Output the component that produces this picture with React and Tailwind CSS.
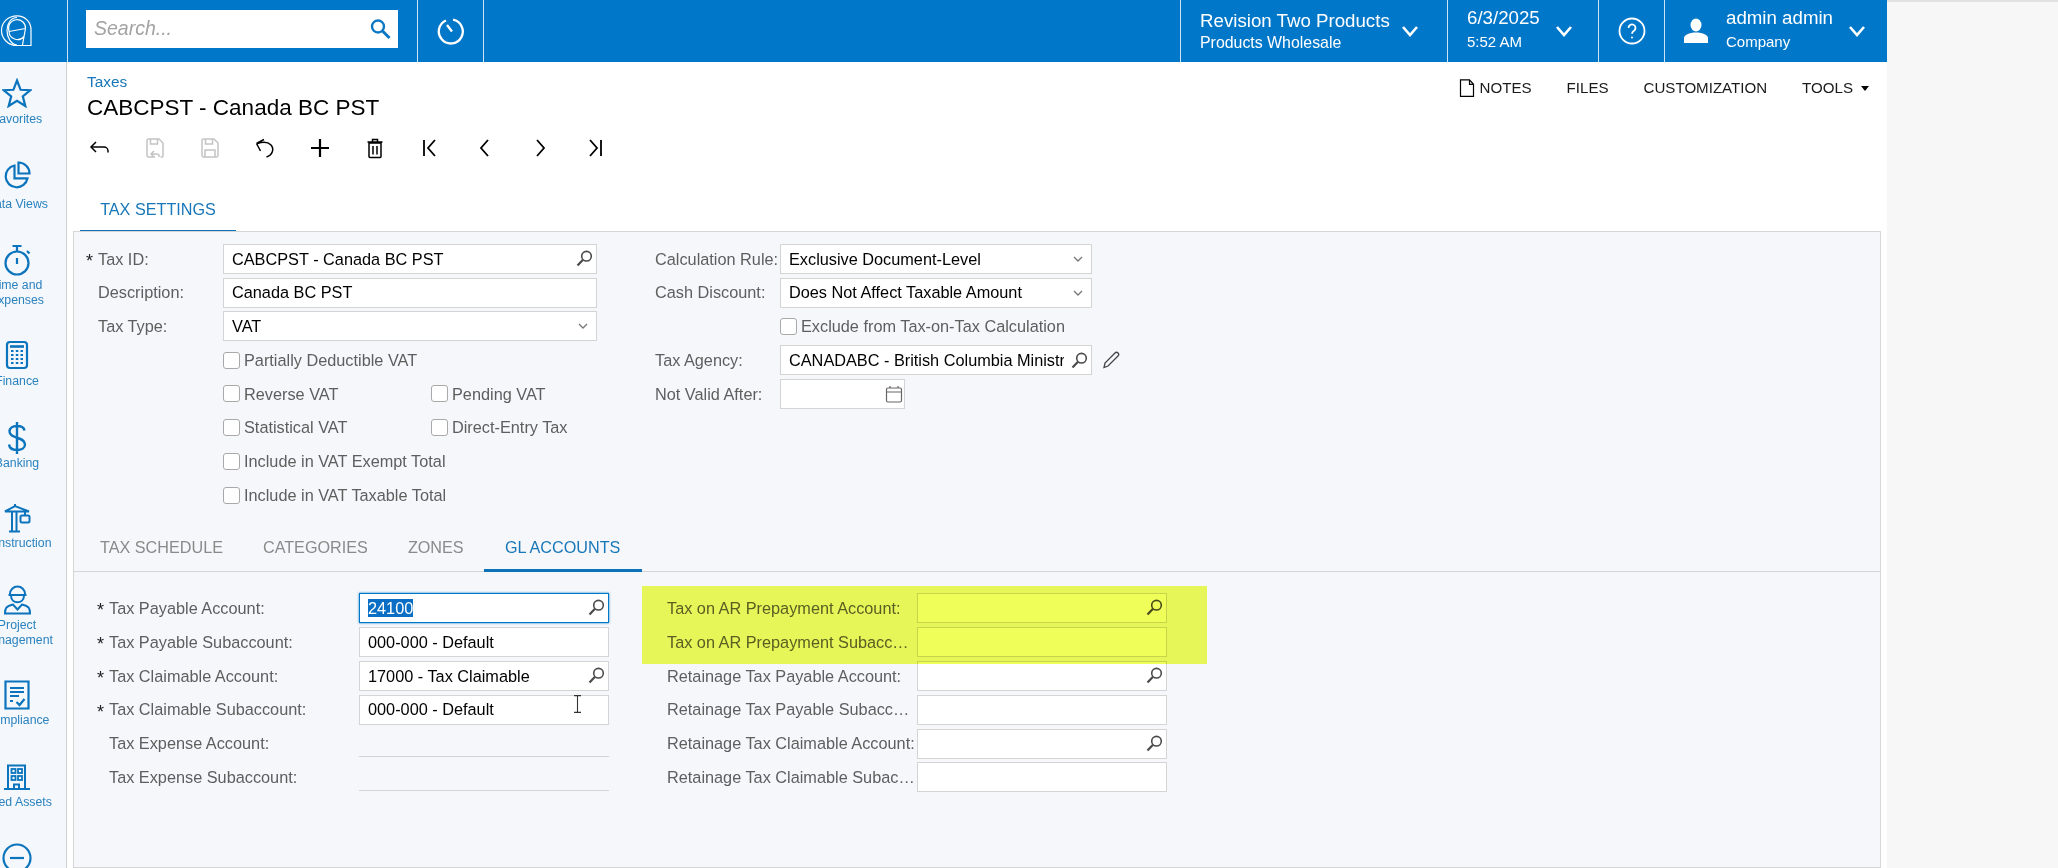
import React from 'react';

const Ico = ({ w = 24, h = 24, vb, className = '', sw = 2, children }) => (
    <svg width={w} height={h} viewBox={vb || `0 0 ${w} ${h}`} fill="none" stroke="currentColor" strokeWidth={sw} className={className}>
        {children}
    </svg>
);

// lookup glass, handle goes bottom-left
const Lookup = () => (
    <Ico w={17} h={17} sw={1.6} className="text-[#4a4a4a] shrink-0">
        <circle cx="10.5" cy="6.2" r="4.8" />
        <path d="M7 9.800 1.500 15.500" strokeWidth="2.2" />
    </Ico>
);

const Chevron = () => (
    <Ico w={14} h={14} sw={1.3} className="text-[#777] shrink-0 mr-[3px]">
        <path d="m3 5 4 4 4-4" />
    </Ico>
);

const HeadChevron = () => (
    <Ico w={18} h={14} sw={2.6} className="text-white shrink-0">
        <path d="m2 3 7 8 7-8" />
    </Ico>
);

const Field = ({ value, className = 'w-[375px]', icon, focused, selected, children }) => (
    <div className={`relative h-[30px] flex items-center pl-[8px] pr-[3px] bg-white border ${focused ? 'border-[#0078c8] shadow-[0_0_2px_#0078c8]' : 'border-[#d4d4d4]'} ${className}`}>
        <span className="flex-1 min-w-0 mr-[7px] overflow-hidden whitespace-nowrap text-black">
            {selected ? <span className="bg-[#0a6fc4] text-white">{value}</span> : value}
        </span>
        {icon}
        {children}
    </div>
);

const Label = ({ text, required, className = '' }) => (
    <div className={`flex items-center shrink-0 ${className}`}>
        <span className="w-[12px] shrink-0 text-[18px] text-[#222] leading-none pt-[5px]">{required ? '*' : ''}</span>
        <span className="truncate text-[#5e5e5e]">{text}</span>
    </div>
);

const Check = ({ label, className = '' }) => (
    <div className={`flex items-center gap-[4px] ${className}`}>
        <div className="w-[17px] h-[17px] bg-white rounded-[3px] border border-[#a9a9a9] shrink-0" />
        <span className="text-[#5e5e5e] whitespace-nowrap">{label}</span>
    </div>
);

const TopRow = ({ children }) => <div className="h-[33.75px] flex items-center">{children}</div>;

const SideItem = ({ label, icon, height, labelTop = 'mt-[-2px]' }) => (
    <div className={`flex flex-col items-center shrink-0 w-[96px] ml-[-31px] ${height}`}>
        <div className="h-[42px] flex items-center justify-center text-[#0b74bd]">{icon}</div>
        <div className={`text-[12.3px] leading-[15px] ${labelTop} text-[#2a82bf] text-center whitespace-pre-line`}>{label}</div>
    </div>
);

const sideItems = [
    {
        label: 'Favorites', height: 'h-[82px]',
        icon: <Ico w={30} h={30} sw={2.2}><path d="M15 2.5 18.6 11.8 28.4 12.2 20.8 18.4 23.3 28 15 22.7 6.7 28 9.2 18.4 1.6 12.2 11.4 11.8Z" /></Ico>,
    },
    {
        label: 'Data Views', height: 'h-[85px]', labelTop: 'mt-[1px]',
        icon: <Ico w={30} h={30} sw={2.2}><path d="M12.5 5.5a11 11 0 1 0 13 12.8h-13Z" /><path d="M16.5 2.5a11 11 0 0 1 11 11h-11Z" /></Ico>,
    },
    {
        label: 'Time and\nExpenses', height: 'h-[95px]', labelTop: 'mt-[-3px]',
        icon: <Ico w={30} h={34} sw={2.2}><circle cx="15" cy="20" r="11.5" /><path d="M10.5 3h9M15 3v5.5M15 15v6M25 8l2.5 2.5" /></Ico>,
    },
    {
        label: 'Finance', height: 'h-[83px]',
        icon: (
            <Ico w={24} h={30} sw={2.2}>
                <rect x="2" y="2" width="20" height="26" rx="3" />
                <path d="M5 6.5h14" strokeWidth="2.6" />
                <path d="M6 11h2.5M10.8 11h2.5M15.5 11h2.5M6 15h2.5M10.8 15h2.5M15.5 15h2.5M6 19h2.5M10.8 19h2.5M15.5 19h2.5M6 23h2.5M10.8 23h2.5M15.5 23h2.5" strokeWidth="2.2" />
            </Ico>
        ),
    },
    {
        label: 'Banking', height: 'h-[80px]', labelTop: 'mt-[-3px]',
        icon: <Ico w={22} h={34} sw={2.4}><path d="M11 1v32M18.5 9.5C18 6.5 15 5 11 5 6.5 5 3.5 7.2 3.5 10.5c0 7.5 15.5 5 15.5 13 0 3.3-3.5 5.5-8 5.5-4.500 0-7.500-2-8-5.500" /></Ico>,
    },
    {
        label: 'Construction', height: 'h-[82px]', labelTop: 'mt-[-3px]',
        icon: (
            <Ico w={30} h={30} sw={2}>
                <path d="M3 8.500 13 3l14 5.500Z" />
                <path d="M10 8.500V28M14.500 8.500V28M7 28.500h11M13 1v2M23 8.500v4" />
                <rect x="18.500" y="12.500" width="9" height="7" rx="1.500" />
            </Ico>
        ),
    },
    {
        label: 'Project\nManagement', height: 'h-[95px]', labelTop: 'mt-[-3px]',
        icon: (
            <Ico w={30} h={30} sw={2}>
                <path d="M8 9a7.500 7.500 0 0 1 15 0M6.500 10h18M9 10.500c0 9 13 9 13 0" />
                <path d="M3 28.500c0-5 1-7.500 8-9l4.500 5 4.500-5c7 1.500 8 4 8 9Z" />
            </Ico>
        ),
    },
    {
        label: 'Compliance', height: 'h-[82px]', labelTop: 'mt-[-3px]',
        icon: (
            <Ico w={26} h={30} sw={2.2}>
                <path d="M24.500 28.500H1.500v-27h23Z" />
                <path d="M6 8h14M6 12h14M6 16h9M6 21h3" />
                <path d="m12.500 22 3 3 5-6" />
            </Ico>
        ),
    },
    {
        label: 'Fixed Assets', height: 'h-[81px]', labelTop: 'mt-[-3px]',
        icon: (
            <Ico w={28} h={26} sw={2}>
                <path d="M5 25V1.500h17V25M1 25h26M11 25v-4.500h5V25" />
                <rect x="8.500" y="5" width="4" height="4" strokeWidth="1.800" />
                <rect x="15" y="5" width="4" height="4" strokeWidth="1.800" />
                <rect x="8.500" y="12" width="4" height="4" strokeWidth="1.800" />
                <rect x="15" y="12" width="4" height="4" strokeWidth="1.800" />
            </Ico>
        ),
    },
    {
        label: '', height: 'h-[60px]',
        icon: <Ico w={30} h={30} sw={2.2}><circle cx="15" cy="15" r="13.500" /><path d="M8 15h14" /></Ico>,
    },
];

const toolIcons = [
    { cls: 'text-black', el: <><path d="M19 15.500v-1.500a4 4 0 0 0-4-4H2" /><path d="M7 5 2 10l5 5" /></> },
    {
        cls: 'text-[#c4c4c4]',
        el: <><path d="M11 20H4.500a1.500 1.500 0 0 1-1.500-1.500V3.500A1.500 1.500 0 0 1 4.500 2H15l4 4v13a1 1 0 0 1-1 1h-1.500" /><path d="M6.500 2v5h7V2M10 14l-3 3 3 3M7 17h6a2 2 0 0 1 2 2v1" /></>,
    },
    {
        cls: 'text-[#c4c4c4]',
        el: <><path d="M4.500 20A1.500 1.500 0 0 1 3 18.500V3.500A1.500 1.500 0 0 1 4.500 2H15l4 4v12.500a1.500 1.500 0 0 1-1.500 1.500Z" /><path d="M6.500 2v5h7V2M6 20v-7h10v7" /></>,
    },
    { cls: 'text-black', el: <><path d="M2.500 6.500 10 2.500M2.500 6.500l4 7.500M3 6.800C9 4.500 14 5 17 8c3.500 4 1.500 10-4.500 12" /></> },
    { cls: 'text-black', el: <path d="M11 2v18M2 11h18" strokeWidth="2.200" /> },
    { cls: 'text-black', el: <><path d="M5 6v13.500a1 1 0 0 0 1 1h10a1 1 0 0 0 1-1V6ZM3.500 5h15M8.500 5V2.500h5V5M9 9v8.500M13 9v8.500" /></> },
    { cls: 'text-black', el: <path d="M5 3v16M16 3l-7 8 7 8" strokeWidth="1.800" /> },
    { cls: 'text-black', el: <path d="m14 3-7 8 7 8" strokeWidth="1.800" /> },
    { cls: 'text-black', el: <path d="m8 3 7 8-7 8" strokeWidth="1.800" /> },
    { cls: 'text-black', el: <path d="M17 3v16M6 3l7 8-7 8" strokeWidth="1.800" /> },
];

const leftRows = [
    { label: 'Tax Payable Account:', required: true, value: '24100', lookup: true, focused: true },
    { label: 'Tax Payable Subaccount:', required: true, value: '000-000 - Default' },
    { label: 'Tax Claimable Account:', required: true, value: '17000 - Tax Claimable', lookup: true },
    { label: 'Tax Claimable Subaccount:', required: true, value: '000-000 - Default', cursor: true },
    { label: 'Tax Expense Account:', readOnly: true },
    { label: 'Tax Expense Subaccount:', readOnly: true },
];

const rightRows = [
    { label: 'Tax on AR Prepayment Account:', lookup: true },
    { label: 'Tax on AR Prepayment Subaccount:' },
    { label: 'Retainage Tax Payable Account:', lookup: true },
    { label: 'Retainage Tax Payable Subaccount:' },
    { label: 'Retainage Tax Claimable Account:', lookup: true },
    { label: 'Retainage Tax Claimable Subaccount:' },
];

export default function App() {
    return (
        <div className="relative w-[2058px] h-[868px] overflow-hidden flex bg-[#f7f7f7] text-[16.3px] font-['Liberation_Sans',Arial,sans-serif]">
            <div className="w-[1887px] h-full flex flex-col shrink-0">
                {/* top bar */}
                <header className="h-[62px] shrink-0 flex bg-[#0077c8] text-white">
                    <div className="w-[68px] border-r border-white/80 overflow-hidden flex items-center">
                        <Ico w={32} h={32} sw={1.2}>
                            <path d="M31 30.500V14.500C31 7 25 .8 17 .8 8 .8 1.500 7.500 1.500 15.500S8 30.500 17 30.500Z" />
                            <path d="M17 2.500C11 2.500 7 8.500 7 15.500S11 29.500 17 30" />
                            <path d="M9 16a8.500 8.500 0 1 1 16.500-2.500M9 16a8.500 8.500 0 0 0 15 5.500" />
                            <path d="M9 16.500 25.500 13.500M25.500 13.500 24 21.500 22.500 30" />
                        </Ico>
                    </div>
                    <div className="w-[350px] border-r border-white/80 pl-[18px] pt-[10px]">
                        <div className="w-[312px] h-[38px] bg-white flex items-center justify-between pl-[8px] pr-[7px]">
                            <span className="italic text-[19.5px] text-[#a3a3a3]">Search...</span>
                            <Ico w={22} h={22} sw={2.4} className="text-[#0a78c4]">
                                <circle cx="9" cy="8.500" r="6" />
                                <path d="m13.500 13 7 7" strokeWidth="3" />
                            </Ico>
                        </div>
                    </div>
                    <div className="w-[66px] border-r border-white/80 flex items-center justify-center">
                        <Ico w={28} h={28} sw={2.300}>
                            <path d="M9 3.500a12 12 0 1 0 7-.800" />
                            <path d="m10 8 5 6.500" />
                        </Ico>
                    </div>
                    <div className="flex-1 border-r border-white/80" />
                    <div className="w-[267px] border-r border-white/80 flex items-center pl-[19px]">
                        <div className="w-[201px] mt-[-2px]">
                            <div className="text-[18.700px] leading-[24px]">Revision Two Products</div>
                            <div className="text-[15.900px] leading-[19px]">Products Wholesale</div>
                        </div>
                        <HeadChevron />
                    </div>
                    <div className="w-[151px] border-r border-white/80 flex items-center pl-[19px]">
                        <div className="w-[88px]">
                            <div className="text-[18.700px] leading-[24px] mt-[-6px]">6/3/2025</div>
                            <div className="text-[15px] leading-[19px] mt-[2px]">5:52 AM</div>
                        </div>
                        <HeadChevron />
                    </div>
                    <div className="w-[66px] border-r border-white/80 flex items-center justify-center">
                        <Ico w={28} h={28} sw={1.800}>
                            <circle cx="14" cy="14" r="12.500" />
                            <path d="M10.500 11a3.500 3.500 0 1 1 5.500 2.800c-1.200.8-2 1.400-2 3" />
                            <circle cx="14" cy="20.500" r="1" fill="currentColor" stroke="none" />
                        </Ico>
                    </div>
                    <div className="w-[222px] flex items-center pl-[19px]">
                        <svg width="24" height="26" viewBox="0 0 24 26" fill="currentColor" className="shrink-0">
                            <ellipse cx="12" cy="7" rx="5.500" ry="6.500" />
                            <path d="M0 25v-5c0-3 5-5.500 12-5.500S24 17 24 20v5Z" />
                        </svg>
                        <div className="ml-[18px] w-[122px]">
                            <div className="text-[18.700px] leading-[24px] mt-[-6px]">admin admin</div>
                            <div className="text-[15px] leading-[19px] mt-[2px]">Company</div>
                        </div>
                        <HeadChevron />
                    </div>
                </header>

                <div className="flex-1 min-h-0 flex">
                    {/* module rail, scrolled a little to the right so labels clip */}
                    <nav className="w-[67px] shrink-0 border-r border-[#cfcfcf] bg-[#f4f7fb] overflow-hidden pt-[10px] flex flex-col">
                        {sideItems.map((s, i) => (
                            <SideItem key={i} {...s} />
                        ))}
                    </nav>

                    <main className="flex-1 min-w-0 bg-white flex flex-col">
                        <div className="flex justify-between pl-[20px] pr-[18px] h-[56px] shrink-0">
                            <div>
                                <div className="text-[15.400px] leading-[18px] mt-[11px] text-[#1877b8]">Taxes</div>
                                <div className="text-[22.500px] leading-[26px] mt-[4px] text-black">CABCPST - Canada BC PST</div>
                            </div>
                            <div className="flex items-center h-[52px] text-[15.100px] text-[#1a1a1a]">
                                <Ico w={17} h={18} sw={1.200} className="text-black mr-[4px]">
                                    <path d="M1.500.8h9l4 4.500v12H1.500ZM10.500.8v4.500h4" />
                                </Ico>
                                <span>NOTES</span>
                                <span className="ml-[35px]">FILES</span>
                                <span className="ml-[35px]">CUSTOMIZATION</span>
                                <span className="ml-[35px]">TOOLS</span>
                                <span className="ml-[8px] border-x-[4px] border-x-transparent border-t-[5px] border-t-black" />
                            </div>
                        </div>

                        <div className="h-[60px] shrink-0 flex items-center pl-[22px] gap-[33px]">
                            {toolIcons.map((t, i) => (
                                <Ico key={i} w={22} h={22} sw={1.500} className={t.cls}>
                                    {t.el}
                                </Ico>
                            ))}
                        </div>

                        <div className="h-[55px] shrink-0 ml-[13px] flex">
                            <div className="w-[156px] h-[55px] pt-[21px] text-center border-b-[3px] border-[#0d72b9] text-[16.200px] leading-[20px] text-[#1877b8]">TAX SETTINGS</div>
                        </div>

                        <div className="flex-1 min-h-0 ml-[6px] mr-[6px] mt-[-2px] border border-[#d6d6d6] bg-[#f5f7fa]">
                            {/* tax settings */}
                            <div className="pl-[12px] pt-[10px] flex h-[280px]">
                                <div className="w-[511px] shrink-0">
                                    <TopRow>
                                        <Label text="Tax ID:" required className="w-[137px]" />
                                        <Field value="CABCPST - Canada BC PST" icon={<Lookup />} className="w-[374px]" />
                                    </TopRow>
                                    <TopRow>
                                        <Label text="Description:" className="w-[137px]" />
                                        <Field value="Canada BC PST" className="w-[374px]" />
                                    </TopRow>
                                    <TopRow>
                                        <Label text="Tax Type:" className="w-[137px]" />
                                        <Field value="VAT" icon={<Chevron />} className="w-[374px]" />
                                    </TopRow>
                                    <TopRow><Check label="Partially Deductible VAT" className="ml-[137px]" /></TopRow>
                                    <TopRow>
                                        <Check label="Reverse VAT" className="ml-[137px] w-[208px]" />
                                        <Check label="Pending VAT" />
                                    </TopRow>
                                    <TopRow>
                                        <Check label="Statistical VAT" className="ml-[137px] w-[208px]" />
                                        <Check label="Direct-Entry Tax" />
                                    </TopRow>
                                    <TopRow><Check label="Include in VAT Exempt Total" className="ml-[137px]" /></TopRow>
                                    <TopRow><Check label="Include in VAT Taxable Total" className="ml-[137px]" /></TopRow>
                                </div>
                                <div className="ml-[58px]">
                                    <TopRow>
                                        <span className="w-[125px] shrink-0 text-[#5e5e5e]">Calculation Rule:</span>
                                        <Field value="Exclusive Document-Level" icon={<Chevron />} className="w-[312px]" />
                                    </TopRow>
                                    <TopRow>
                                        <span className="w-[125px] shrink-0 text-[#5e5e5e]">Cash Discount:</span>
                                        <Field value="Does Not Affect Taxable Amount" icon={<Chevron />} className="w-[312px]" />
                                    </TopRow>
                                    <TopRow><Check label="Exclude from Tax-on-Tax Calculation" className="ml-[125px]" /></TopRow>
                                    <TopRow>
                                        <span className="w-[125px] shrink-0 text-[#5e5e5e]">Tax Agency:</span>
                                        <Field value="CANADABC - British Columbia Ministry of Finance" icon={<Lookup />} className="w-[312px]" />
                                        <Ico w={18} h={18} sw={1.300} className="ml-[10px] text-[#444]">
                                            <path d="M2 16.500 3 12 13 2c1-1 2-1 3 0s1 2 0 3L6 15Z" />
                                        </Ico>
                                    </TopRow>
                                    <TopRow>
                                        <span className="w-[125px] shrink-0 text-[#5e5e5e]">Not Valid After:</span>
                                        <Field
                                            value=""
                                            className="w-[125px]"
                                            icon={
                                                <Ico w={18} h={18} sw={1.200} className="text-[#666] mr-[-2px]">
                                                    <rect x="1.500" y="3" width="15" height="14" rx="1.500" />
                                                    <path d="M1.500 7h15M5 1v2M13 1v2" />
                                                </Ico>
                                            }
                                        />
                                    </TopRow>
                                </div>
                            </div>

                            {/* inner tabs */}
                            <div className="h-[60px] flex border-b border-[#d6d6d6] pl-[6px] text-[16.200px]">
                                <div className="px-[20px] pt-[26px] leading-[18px] text-[#8a8a8a]">TAX SCHEDULE</div>
                                <div className="px-[20px] pt-[26px] leading-[18px] text-[#8a8a8a]">CATEGORIES</div>
                                <div className="px-[20px] pt-[26px] leading-[18px] text-[#8a8a8a]">ZONES</div>
                                <div className="w-[158px] text-center mb-[-1px] pt-[26px] leading-[18px] text-[#1877b8] border-b-[3px] border-[#0d72b9]">GL ACCOUNTS</div>
                            </div>

                            {/* gl accounts */}
                            <div className="relative pl-[23px] pt-[19px] flex">
                                <div className="w-[512px] shrink-0">
                                    {leftRows.map((r) => (
                                        <div key={r.label} className="h-[33.900px] flex items-center">
                                            <Label text={r.label} required={r.required} className="w-[262px]" />
                                            {r.readOnly ? (
                                                <div className="w-[250px] h-[27px] border-b border-[#d4d4d4]" />
                                            ) : (
                                                <Field
                                                    value={r.value}
                                                    className="w-[250px]"
                                                    focused={r.focused}
                                                    selected={r.focused}
                                                    icon={r.lookup ? <Lookup /> : null}
                                                >
                                                    {r.cursor && (
                                                        <Ico w={9} h={18} sw={1.100} className="absolute left-[213px] top-[-1px] text-[#333]">
                                                            <path d="M1 .6h7M4.500.6v16.800M1 17.400h7" />
                                                        </Ico>
                                                    )}
                                                </Field>
                                            )}
                                        </div>
                                    ))}
                                </div>
                                <div className="ml-[58px]">
                                    {rightRows.map((r) => (
                                        <div key={r.label} className="h-[33.900px] flex items-center">
                                            <div className="w-[250px] shrink-0 truncate text-[#5e5e5e]">{r.label}</div>
                                            <Field value="" className="w-[250px]" icon={r.lookup ? <Lookup /> : null} />
                                        </div>
                                    ))}
                                </div>
                                {/* highlighter someone put over the two prepayment rows */}
                                <div className="absolute left-[568px] top-[14px] w-[565px] h-[78px] bg-[#f0fe5a] mix-blend-multiply" />
                            </div>
                        </div>
                    </main>
                </div>
            </div>
            <div className="flex-1 h-[2px] bg-[#e2e2e2]" />
        </div>
    );
}
